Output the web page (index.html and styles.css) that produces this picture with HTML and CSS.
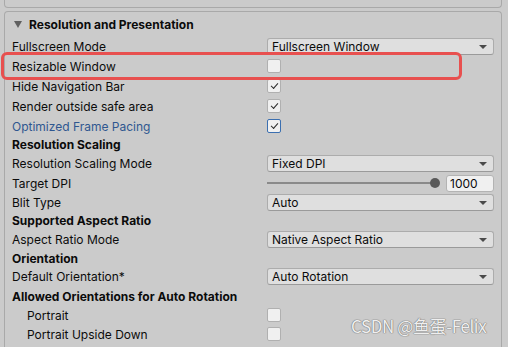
FILE: index.html
```html
<!DOCTYPE html>
<html lang="en">
	<head>
		<meta charset="UTF-8" />
		<meta name="viewport" content="width=device-width, initial-scale=1.0" />
		<title>Player Settings - Resolution and Presentation</title>
		<link rel="stylesheet" href="styles.css">
	</head>

	<body>
		<div class="prev-box"></div>
		<div class="section">
			<div class="section-header">
				<span class="foldout"></span>
				<span>Resolution and Presentation</span>
			</div>

			<div class="row h20">
				<div class="label">Fullscreen Mode</div>
				<div class="field"><div class="dropdown">Fullscreen Window</div></div>
			</div>
			<div class="row h20">
				<div class="label">Resizable Window</div>
				<div class="field"><span class="checkbox"></span></div>
			</div>
			<div class="row h20">
				<div class="label">Hide Navigation Bar</div>
				<div class="field"><span class="checkbox checked"></span></div>
			</div>
			<div class="row h20">
				<div class="label">Render outside safe area</div>
				<div class="field"><span class="checkbox checked"></span></div>
			</div>
			<div class="row h20">
				<div class="label blue">Optimized Frame Pacing</div>
				<div class="field"><span class="checkbox checked focused"></span></div>
			</div>

			<div class="row h17"><div class="label bold">Resolution Scaling</div></div>
			<div class="row h20">
				<div class="label">Resolution Scaling Mode</div>
				<div class="field"><div class="dropdown">Fixed DPI</div></div>
			</div>
			<div class="row h20">
				<div class="label">Target DPI</div>
				<div class="field">
					<div class="slider"><div class="track"></div><div class="thumb"></div></div>
					<div class="number">1000</div>
				</div>
			</div>
			<div class="row h18">
				<div class="label">Blit Type</div>
				<div class="field"><div class="dropdown">Auto</div></div>
			</div>

			<div class="row h19"><div class="label bold">Supported Aspect Ratio</div></div>
			<div class="row h19">
				<div class="label">Aspect Ratio Mode</div>
				<div class="field"><div class="dropdown">Native Aspect Ratio</div></div>
			</div>

			<div class="row h18"><div class="label bold">Orientation</div></div>
			<div class="row h19">
				<div class="label">Default Orientation*</div>
				<div class="field"><div class="dropdown">Auto Rotation</div></div>
			</div>

			<div class="row h20"><div class="label bold">Allowed Orientations for Auto Rotation</div></div>
			<div class="row h18">
				<div class="label indent">Portrait</div>
				<div class="field"><span class="checkbox"></span></div>
			</div>
			<div class="row h20">
				<div class="label indent">Portrait Upside Down</div>
				<div class="field"><span class="checkbox"></span></div>
			</div>
		</div>

		<!-- annotation + watermark sit over the inspector -->
		<div class="highlight"></div>
		<div class="watermark">CSDN @鱼蛋-Felix</div>
	</body>
</html>
```

FILE: styles.css
```css
* {
	box-sizing: border-box;
}
body {
	margin: 0;
	width: 508px;
	height: 347px;
	overflow: hidden;
	background-color: #cbcbcb;
	font-family: Inter, "Noto Sans", sans-serif;
	font-size: 12px;
	color: #0b0b0b;
	position: relative;
}
.prev-box {
	margin-left: 4px;
	width: 498px;
	height: 8px;
	border: 1px solid #a9a9a9;
	border-top: none;
	border-radius: 0 0 4px 4px;
}
.section {
	margin-top: 3px;
	margin-left: 4px;
	width: 498px;
	height: 340px;
	border: 1px solid #a9a9a9;
	border-bottom: none;
	border-radius: 4px 4px 0 0;
}
.section-header {
	height: 24px;
	display: flex;
	align-items: center;
	padding-left: 9px;
	font-weight: 700;
}
.foldout {
	width: 0;
	height: 0;
	border-left: 4px solid transparent;
	border-right: 4px solid transparent;
	border-top: 7px solid #606060;
	margin-right: 7px;
	margin-top: 1px;
}
.row {
	display: flex;
	align-items: center;
}
.h17 { height: 17px; }
.h18 { height: 18px; }
.h19 { height: 19px; }
.h20 { height: 20px; }
.label {
	width: 262px;
	padding-left: 7px;
	white-space: nowrap;
}
.label.bold {
	font-weight: 700;
}
.label.blue {
	color: #2f5790;
}
.label.indent {
	padding-left: 22px;
}
.field {
	width: 227px;
	display: flex;
	align-items: center;
}
.dropdown {
	width: 100%;
	height: 17px;
	background-color: #dfdfdf;
	border: 1px solid #acacac;
	border-bottom-color: #9a9a9a;
	border-radius: 3px;
	padding-left: 4px;
	line-height: 15px;
	position: relative;
}
.dropdown::after {
	content: "";
	position: absolute;
	right: 6px;
	top: 6px;
	border-left: 4px solid transparent;
	border-right: 4px solid transparent;
	border-top: 4px solid #4a4a4a;
}
.checkbox {
	width: 14px;
	height: 14px;
	background-color: #f0f0f0;
	border: 1px solid #b0b0b0;
	border-radius: 2px;
	position: relative;
}
.checkbox.checked::after {
	content: "";
	position: absolute;
	left: 3px;
	top: 2px;
	width: 6px;
	height: 3px;
	border-left: 1.3px solid #2b2b2b;
	border-bottom: 1.3px solid #2b2b2b;
	transform: rotate(-48deg);
	transform-origin: center;
	margin-top: 1px;
}
.checkbox.focused {
	border-color: #3b6fb0;
}
.slider {
	flex: 1;
	height: 12px;
	position: relative;
	margin-right: 6px;
}
.track {
	position: absolute;
	left: 0;
	right: 6px;
	top: 5px;
	height: 2px;
	background-color: #8a8a8a;
}
.thumb {
	position: absolute;
	right: 0;
	top: 1px;
	width: 10px;
	height: 10px;
	border-radius: 50%;
	background-color: #595959;
}
.number {
	width: 48px;
	height: 17px;
	background-color: #f0f0f0;
	border: 1px solid #b3b3b3;
	border-radius: 3px;
	padding-left: 3px;
	line-height: 15px;
}
.highlight {
	position: absolute;
	left: 1px;
	top: 52px;
	width: 461px;
	height: 28px;
	border: 3px solid #e8504f;
	border-radius: 6px;
}
.watermark {
	position: absolute;
	left: 351px;
	top: 315px;
	font-family: "Noto Sans CJK SC", "Noto Sans", sans-serif;
	font-size: 17px;
	letter-spacing: -0.4px;
	line-height: 22px;
	color: #efefef;
	text-shadow: 0 0 1px #7a7a7a, 0 0 1px #7a7a7a, 0 0 1px #7a7a7a;
	white-space: nowrap;
}
```
